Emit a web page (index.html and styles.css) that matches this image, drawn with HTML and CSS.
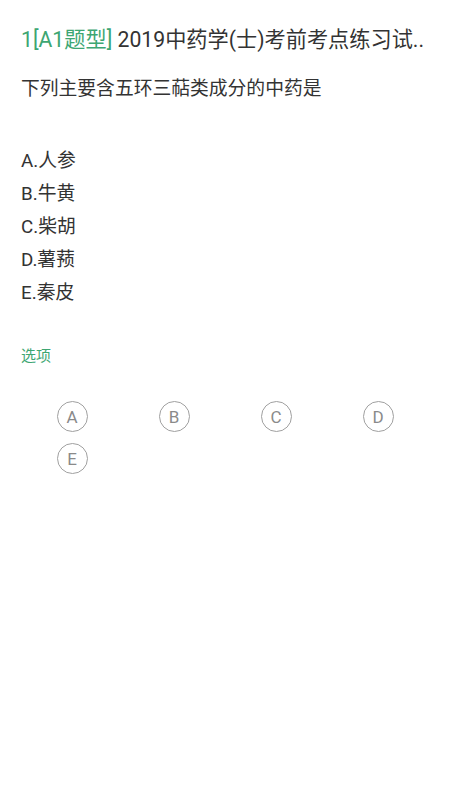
FILE: index.html
```html
<!DOCTYPE html>
<html lang="zh-CN">
<head>
<meta charset="utf-8">
<title>练习</title>
<link rel="stylesheet" href="styles.css">
</head>
<body>
<main class="page">
  <h1 class="title"><span class="tag">1[A1题型]</span> 2019中药学(士)考前考点练习试..</h1>
  <p class="question">下列主要含五环三萜类成分的中药是</p>
  <ul class="options">
    <li>A.人参</li>
    <li>B.牛黄</li>
    <li>C.柴胡</li>
    <li>D.薯蓣</li>
    <li>E.秦皮</li>
  </ul>
  <div class="section-label">选项</div>
  <div class="choices">
    <div class="cell"><span class="circle">A</span></div>
    <div class="cell"><span class="circle">B</span></div>
    <div class="cell"><span class="circle">C</span></div>
    <div class="cell"><span class="circle">D</span></div>
    <div class="cell"><span class="circle">E</span></div>
  </div>
</main>
</body>
</html>
```
FILE: styles.css
```css
html, body {
  margin: 0;
  padding: 0;
  background: #ffffff;
}
body {
  font-family: Roboto, "Noto Sans CJK SC", sans-serif;
  color: #333333;
}
.page {
  padding: 26px 21px 0 21px;
}
.title {
  margin: 0;
  font-size: 21.2px;
  font-weight: normal;
  line-height: 28px;
  white-space: nowrap;
  color: #333333;
}
.tag {
  color: #3da672;
}
.question {
  margin: 21px 0 0 0;
  font-size: 18.8px;
  line-height: 28px;
}
.options {
  list-style: none;
  margin: 42px 0 0 0;
  padding: 0;
  font-size: 18.8px;
  line-height: 33px;
}
.section-label {
  margin-top: 36px;
  font-size: 15px;
  line-height: 20px;
  color: #3da672;
}
.choices {
  margin-top: 35px;
  display: grid;
  grid-template-columns: repeat(4, 1fr);
  row-gap: 11px;
}
.cell {
  display: flex;
  justify-content: center;
}
.circle {
  box-sizing: border-box;
  width: 31px;
  height: 31px;
  border: 1.6px solid #a0a0a0;
  border-radius: 50%;
  display: flex;
  align-items: center;
  justify-content: center;
  font-size: 17px;
  color: #8a8a8a;
}
```
